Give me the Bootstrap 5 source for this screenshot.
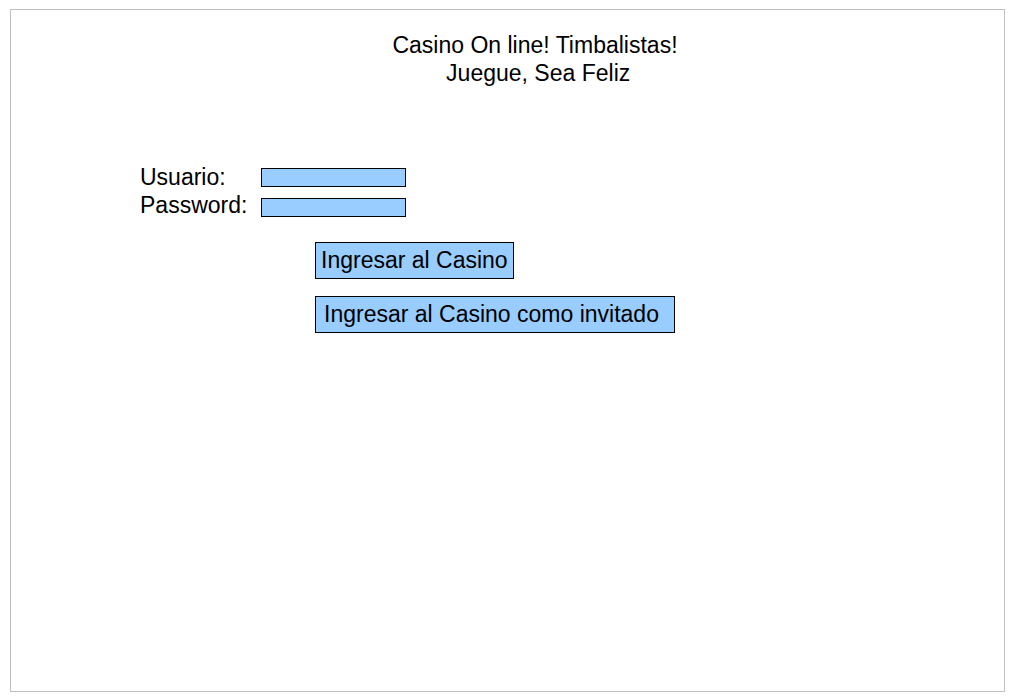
<!DOCTYPE html>
<html lang="es">
<head>
<meta charset="utf-8">
<meta name="viewport" content="width=device-width, initial-scale=1">
<title>Casino On line! Timbalistas!</title>
<link rel="stylesheet" href="https://cdn.jsdelivr.net/npm/bootstrap@5.3.0/dist/css/bootstrap.min.css">
<style>
  body { font-family: "Liberation Sans", Arial, sans-serif; font-size: 23px; line-height: 28px; color: #000; background: #fff; }
  .page-frame { min-height: calc(100vh - 16px); margin: 9px 7px 7px 10px; border: 1px solid #c0c0c0; padding: 21px 0 24px; }
  .page-title { font-size: 23px; line-height: 28px; font-weight: 400; padding-left: 55px; margin-bottom: 76px; }
  .login-form { margin-left: 129px; }
  .field-labels { width: 121px; }
  .field-boxes { gap: 11px; padding-top: 5px; }
  .field-box { width: 145px; height: 19px; min-height: 0; padding: 0 4px; font-size: 14px; }
  .field-box, .action-btn, .field-box:focus { background: #99ccff; border: 1px solid #000; border-radius: 0; color: #000; }
  .actions { margin: 23px 0 0 175px; gap: 17px; }
  .action-btn { padding: 3px 5px 4px; font-size: 23px; line-height: 28px; text-align: left; }
  .action-btn:hover { background: #80bfff; border-color: #000; color: #000; }
  .guest-btn { width: 360px; padding-left: 8px; }
</style>
</head>
<body>
<main class="page-frame">
  <header class="text-center">
    <h1 class="page-title">Casino On line! Timbalistas!<br>&nbsp;Juegue, Sea Feliz</h1>
  </header>
  <form class="login-form">
    <div class="d-flex align-items-start">
      <div class="field-labels d-flex flex-column">
        <label for="usuario">Usuario:</label>
        <label for="password">Password:</label>
      </div>
      <div class="field-boxes d-flex flex-column">
        <input class="form-control field-box" type="text" id="usuario" autocomplete="username">
        <input class="form-control field-box" type="password" id="password" autocomplete="current-password">
      </div>
    </div>
    <div class="actions d-flex flex-column align-items-start">
      <button class="btn action-btn" type="submit">Ingresar al Casino</button>
      <button class="btn action-btn guest-btn" type="button">Ingresar al Casino como invitado</button>
    </div>
  </form>
</main>
<script src="https://cdn.jsdelivr.net/npm/bootstrap@5.3.0/dist/js/bootstrap.bundle.min.js"></script>
</body>
</html>
